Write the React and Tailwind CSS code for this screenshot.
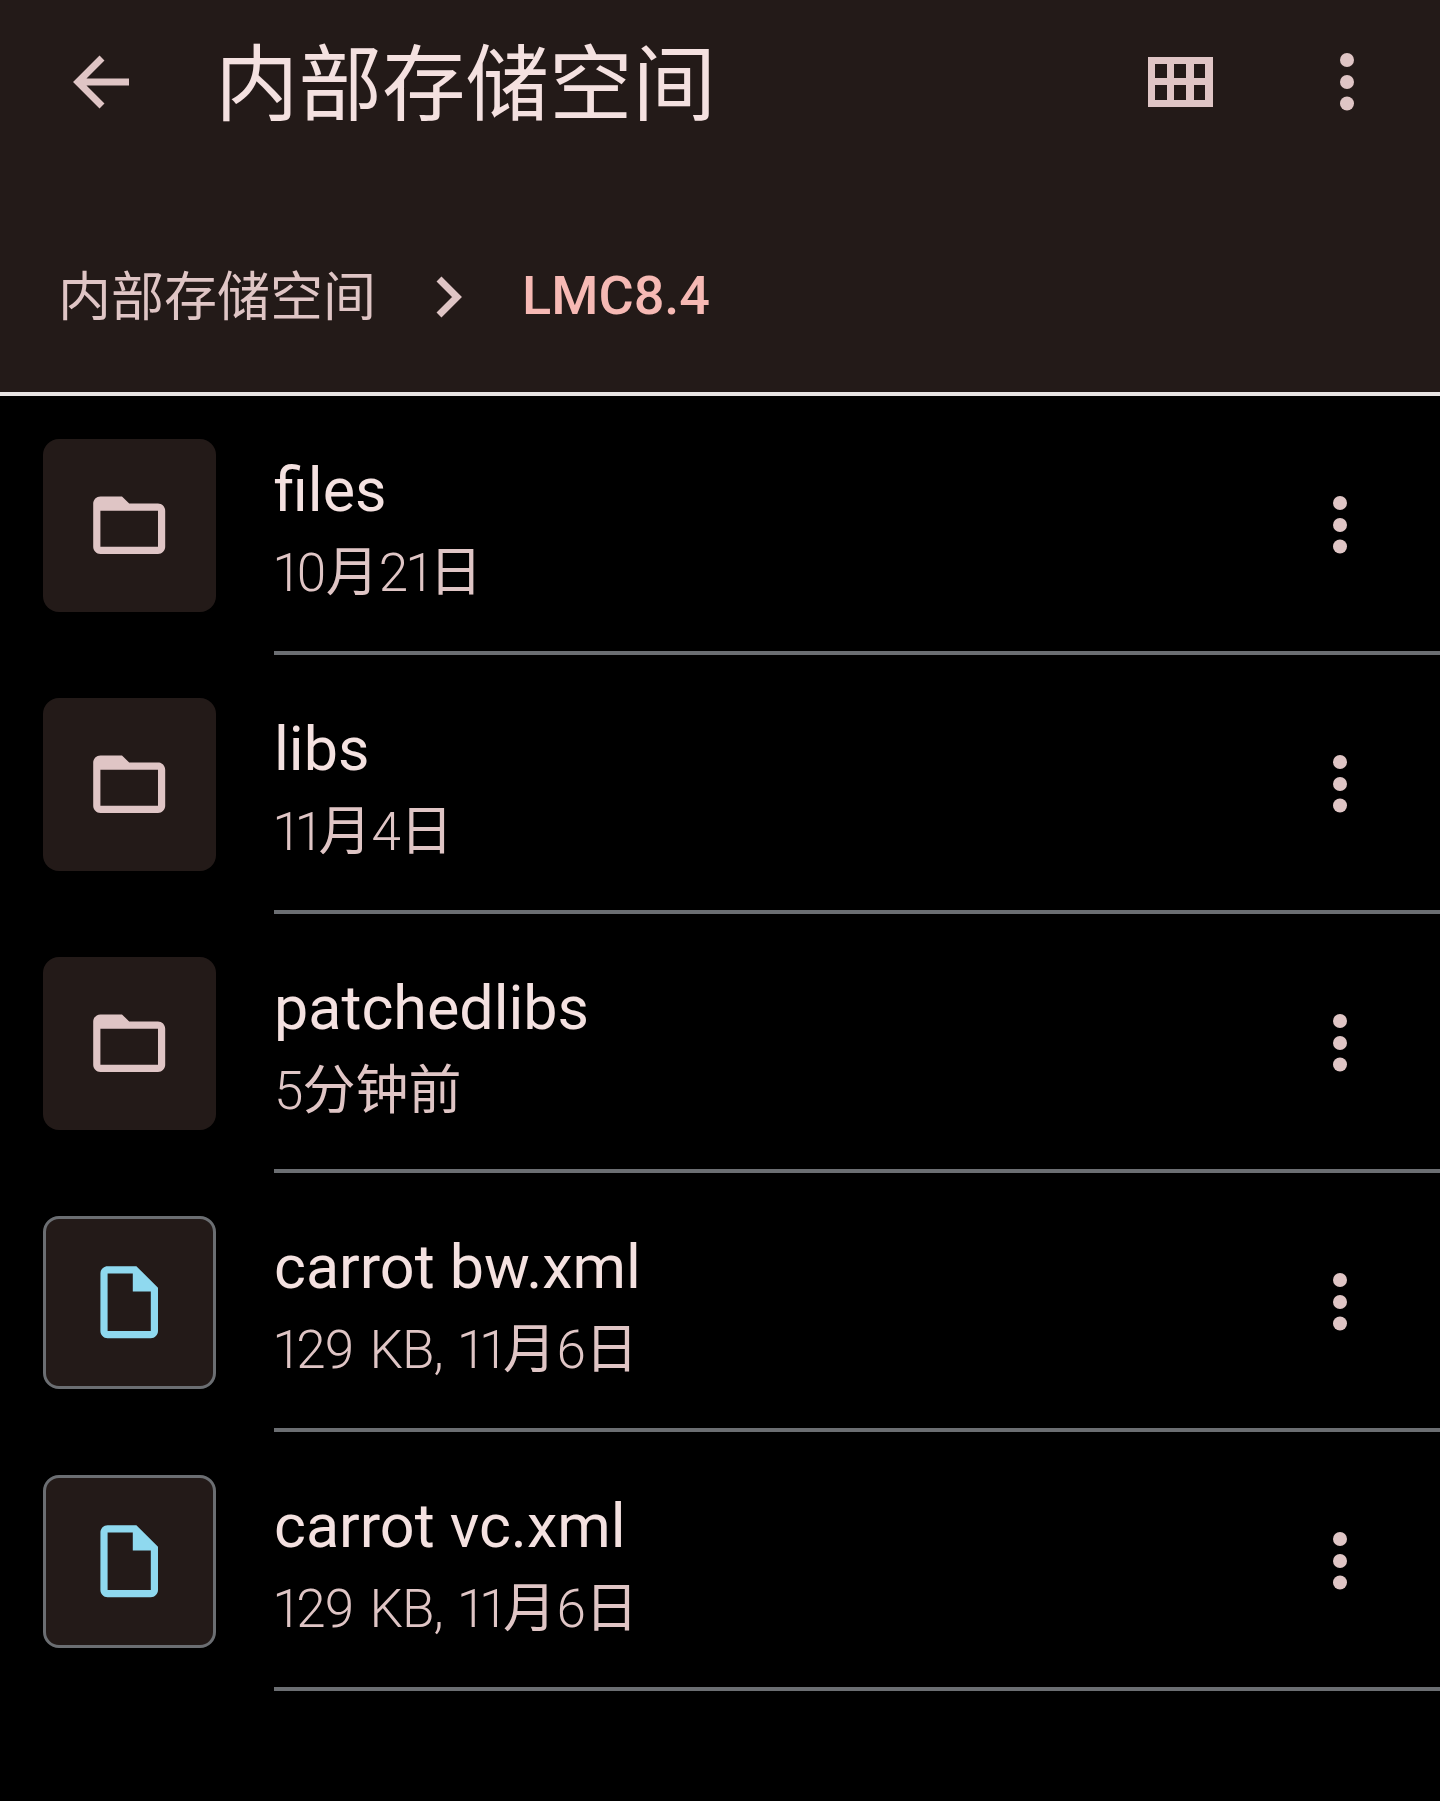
const rows = [
  { name: "files", meta: "10月21日", type: "folder" },
  { name: "libs", meta: "11月4日", type: "folder" },
  { name: "patchedlibs", meta: "5分钟前", type: "folder" },
  { name: "carrot bw.xml", meta: "129 KB, 11月6日", type: "file" },
  { name: "carrot vc.xml", meta: "129 KB, 11月6日", type: "file" },
];

const font = { fontFamily: '"Roboto", "Noto Sans CJK SC", sans-serif' };

function Dots({ className }) {
  return (
    <svg width="14" height="58" viewBox="0 0 14 58" className={className} fill="#dfc5c5">
      <circle cx="7" cy="7" r="7" />
      <circle cx="7" cy="29" r="7" />
      <circle cx="7" cy="50.5" r="7" />
    </svg>
  );
}

function Meta({ text }) {
  const parts = text.split(/([\u4e00-\u9fff]+)/).filter(Boolean);
  return (
    <div className="text-[53px] leading-[84px] text-[#dfc5c5]">
      {parts.map((p, i) =>
        /[\u4e00-\u9fff]/.test(p) ? (
          <span key={i}>{p}</span>
        ) : (
          <span key={i} className="font-light proportional-nums tracking-[-1px] [word-spacing:4px]">{p}</span>
        )
      )}
    </div>
  );
}

function Row({ row }) {
  const isFile = row.type === "file";
  return (
    <div className="flex h-[259px] pl-[43px]">
      <div
        className={
          "flex h-[173px] w-[173px] shrink-0 items-center justify-center rounded-[16px] bg-[#231a18] " +
          (isFile ? "border-[3px] border-[#6b6e72]" : "")
        }
      >
        <svg width="86.4" height="86.4" viewBox="0 0 24 24" fill={isFile ? "#8fd9ef" : "#dfc5c5"}>
          {isFile ? (
            <path d="M14 2H6c-1.1 0-1.99.9-1.99 2L4 20c0 1.1.89 2 1.99 2H18c1.1 0 2-.9 2-2V8l-6-6zM6 20V4h7v5h5v11H6z" />
          ) : (
            <path d="M20 6h-8l-2-2H4c-1.1 0-2 .9-2 2v12c0 1.1.9 2 2 2h16c1.1 0 2-.9 2-2V8c0-1.1-.9-2-2-2zm0 12H4V8h16v10z" />
          )}
        </svg>
      </div>
      <div className="ml-[58px] flex h-[216px] flex-1 items-start border-b-[4px] border-[#6b6e72]">
        <div className="flex-1 pt-[10px]">
          <div className="text-[61px] leading-[82px] text-[#f4e1e0]">{row.name}</div>
          <Meta text={row.meta} />
        </div>
        <Dots className="mr-[93px] mt-[57px]" />
      </div>
    </div>
  );
}

export default function App() {
  return (
    <div className="min-h-[1801px] bg-black" style={font}>
      <header className="flex h-[396px] flex-col border-b-[4px] border-[#e8e4e3] bg-[#231a18]">
        <div className="flex h-[164px] items-center">
          <svg width="60" height="60" viewBox="0 0 60 60" className="ml-[71px] shrink-0" fill="none" stroke="#dfc5c5" strokeWidth="7">
            <path d="M58 30H7M31 6L7 30l24 24" />
          </svg>
          <h1 className="ml-[84px] flex-1 pt-[7px] text-[83.5px] font-normal leading-none text-[#f4e1e0]">内部存储空间</h1>
          <svg width="65" height="50" viewBox="0 0 65 50" className="shrink-0" fill="#dfc5c5" fillRule="evenodd">
            <path d="M0 0h65v50H0zM7 7v14h12V7zm19 0v14h12V7zm20 0v14h11V7zM7 28v15h12V28zm19 0v15h12V28zm20 0v15h11V28z" />
          </svg>
          <Dots className="ml-[127px] mr-[86px] shrink-0" />
        </div>
        <div className="mt-[96px] flex h-[76px] items-center pl-[58px]">
          <span className="text-[53px] leading-none text-[#dfc5c5]">内部存储空间</span>
          <svg width="30" height="44" viewBox="0 0 30 44" className="mb-[3px] ml-[59px]" fill="none" stroke="#dfc5c5" strokeWidth="7">
            <path d="M4 4L22 22L4 40" />
          </svg>
          <span className="mb-[4px] ml-[57px] text-[54px] font-medium leading-none text-[#f6b9b4]">LMC8.4</span>
        </div>
      </header>
      <main className="pt-[43px]">
        {rows.map((r) => (
          <Row key={r.name} row={r} />
        ))}
      </main>
    </div>
  );
}
